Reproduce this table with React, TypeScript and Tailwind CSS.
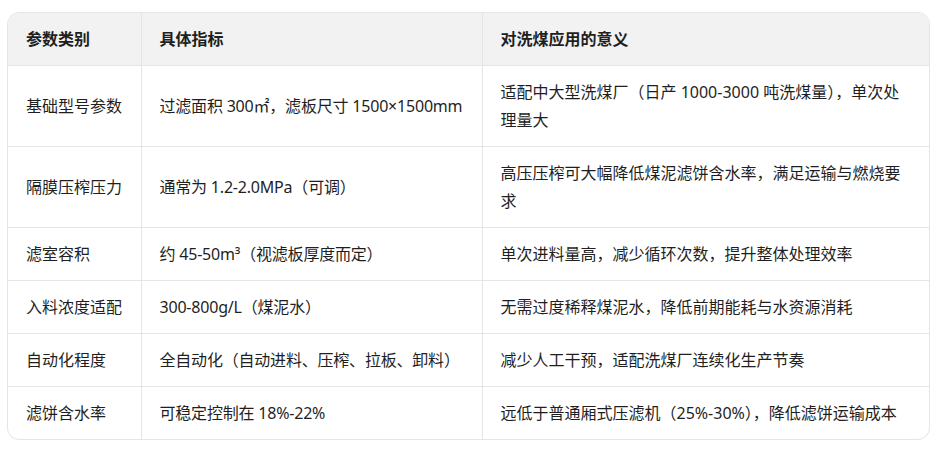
import React from 'react';

type Row = { name: string; spec: string; meaning: string };

const rows: Row[] = [
  {
    name: '基础型号参数',
    spec: '过滤面积 300㎡，滤板尺寸 1500×1500mm',
    meaning: '适配中大型洗煤厂（日产 1000-3000 吨洗煤量），单次处理量大',
  },
  {
    name: '隔膜压榨压力',
    spec: '通常为 1.2-2.0MPa（可调）',
    meaning: '高压压榨可大幅降低煤泥滤饼含水率，满足运输与燃烧要求',
  },
  {
    name: '滤室容积',
    spec: '约 45-50m³（视滤板厚度而定）',
    meaning: '单次进料量高，减少循环次数，提升整体处理效率',
  },
  {
    name: '入料浓度适配',
    spec: '300-800g/L（煤泥水）',
    meaning: '无需过度稀释煤泥水，降低前期能耗与水资源消耗',
  },
  {
    name: '自动化程度',
    spec: '全自动化（自动进料、压榨、拉板、卸料）',
    meaning: '减少人工干预，适配洗煤厂连续化生产节奏',
  },
  {
    name: '滤饼含水率',
    spec: '可稳定控制在 18%-22%',
    meaning: '远低于普通厢式压滤机（25%-30%），降低滤饼运输成本',
  },
];

export default function App() {
  return (
    <div
      className="min-h-[452px] w-[940px] bg-white pl-[7px] pt-[12px] text-[16px] text-[#1f1f1f]"
      style={{ fontFamily: '"Noto Sans", "Noto Sans CJK SC", sans-serif' }}
    >
      <div className="w-[923px] overflow-hidden rounded-[12px] border border-[#e5e5e5]">
        <table className="w-full table-fixed border-collapse leading-7">
          <colgroup>
            <col className="w-[133px]" />
            <col className="w-[341px]" />
            <col />
          </colgroup>
          <thead>
            <tr className="bg-[#f2f2f2] text-left">
              <th className="px-[18px] py-3 font-semibold">参数类别</th>
              <th className="border-l border-[#e5e5e5] px-[18px] py-3 font-semibold">具体指标</th>
              <th className="border-l border-[#e5e5e5] px-[18px] py-3 font-semibold">对洗煤应用的意义</th>
            </tr>
          </thead>
          <tbody>
            {rows.map((r) => (
              <tr key={r.name} className="border-t border-[#e5e5e5]">
                <td className="px-[18px] py-3">{r.name}</td>
                <td className="whitespace-nowrap border-l border-[#e5e5e5] px-[18px] py-3 tracking-[-0.2px]">
                  {r.spec}
                </td>
                <td className="border-l border-[#e5e5e5] px-[18px] py-3">{r.meaning}</td>
              </tr>
            ))}
          </tbody>
        </table>
      </div>
    </div>
  );
}
